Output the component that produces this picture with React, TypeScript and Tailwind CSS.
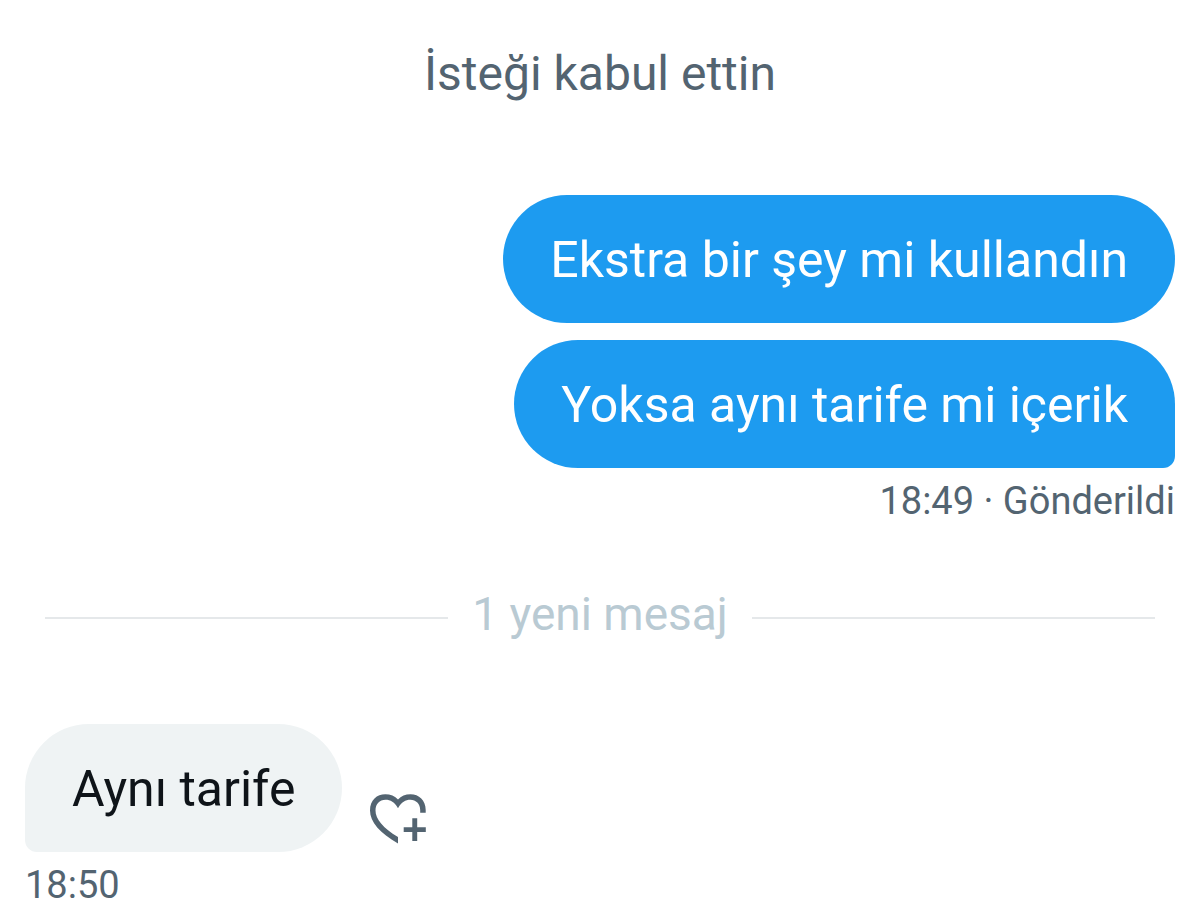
import React from 'react'
import clsx from 'clsx'

interface BubbleProps {
  text: string
  sent?: boolean
  tail?: boolean
}

function Bubble({ text, sent = false, tail = false }: BubbleProps) {
  return (
    <p
      className={clsx(
        'rounded-[64px] px-[47px] pt-[33px] pb-[31px] text-[50px] leading-[64px]',
        sent ? 'bg-[#1d9bf0] text-white' : 'bg-[#eff3f4] text-[#0f1419]',
        tail && (sent ? 'rounded-br-xl' : 'rounded-bl-xl')
      )}
    >
      {text}
    </p>
  )
}

function HeartPlusIcon() {
  return (
    <svg viewBox="0 0 56 50" className="w-14 fill-current" aria-hidden="true">
      <path d="M28 49.5C10 39 0 28 0 16.5C0 6 7 .3 15.3 .3C20.3 .3 25 2.2 28 5.5C31 2.2 35.5 .3 40.5 .3C49 .3 55.7 6.5 55.7 16V18.7H50.2V16C50.2 10 46 5.8 40.3 5.8C35.5 5.8 31.5 8 28 14.3C24.5 8 20.5 5.8 15.5 5.8C9.5 5.8 5.5 10 5.5 16.5C5.5 25 13 34 28 43Z" />
      <path d="M42.3 24.3H47.2V33.2H55.8V37.9H47.2V47H42.3V37.9H33.7V33.2H42.3Z" />
    </svg>
  )
}

export default function App() {
  return (
    <main className="bg-white px-[25px] pt-[46px] font-[Roboto,sans-serif] text-[#536471]">
      <p className="text-center text-[48px] leading-[56px]">İsteği kabul ettin</p>

      {/* Sent messages */}
      <section className="mt-[93px] flex flex-col items-end gap-[17px]">
        <Bubble text="Ekstra bir şey mi kullandın" sent />
        <Bubble text="Yoksa aynı tarife mi içerik" sent tail />
      </section>
      <p className="mt-[13px] text-right text-[38px] leading-10">18:49 · Gönderildi</p>

      {/* Unread divider */}
      <div className="mx-5 mt-[65px] flex items-center gap-6 text-[46px] leading-[56px] text-[#b9cad3]">
        <span className="mt-2 h-[2px] flex-1 bg-[#e5e8ea]" />
        <span>1 yeni mesaj</span>
        <span className="mt-2 h-[2px] flex-1 bg-[#e5e8ea]" />
      </div>

      {/* Received message */}
      <section className="mt-[82px] flex items-end gap-7">
        <Bubble text="Aynı tarife" tail />
        <button type="button" aria-label="Tepki ekle" className="mb-2">
          <HeartPlusIcon />
        </button>
      </section>
      <p className="mt-[13px] text-[38px] leading-10">18:50</p>
    </main>
  )
}
